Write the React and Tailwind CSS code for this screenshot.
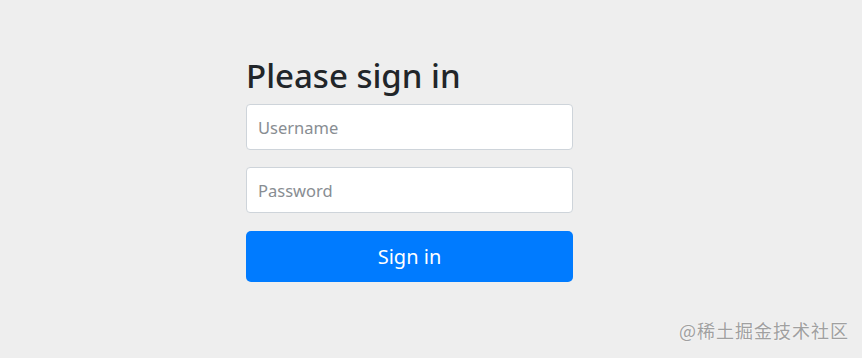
export default function App() {
  return (
    <div className="relative w-[862px] h-[358px] bg-[#eeeeee] font-['Noto_Sans','Open_Sans',sans-serif] overflow-hidden">
      <form className="ml-[246px] pt-[54px] w-[327px] flex flex-col" onSubmit={(e) => e.preventDefault()}>
        <h2 className="text-[33px] leading-[44px] font-medium text-[#212529] mb-[6px]">Please sign in</h2>
        <input
          type="text"
          placeholder="Username"
          className="h-[46px] w-full rounded-[4px] border border-[#ced4da] bg-white px-[11px] pt-[1px] text-[16.5px] text-[#495057] placeholder:text-[#888d92] outline-none"
        />
        <input
          type="password"
          placeholder="Password"
          className="mt-[17px] h-[46px] w-full rounded-[4px] border border-[#ced4da] bg-white px-[11px] pt-[1px] text-[16.5px] text-[#495057] placeholder:text-[#888d92] outline-none"
        />
        <button
          type="submit"
          className="mt-[18px] h-[51px] w-full rounded-[5px] bg-[#007bff] text-white text-[20px]"
        >
          Sign in
        </button>
      </form>
      <div className="absolute right-[13px] bottom-[16px] text-[18px] leading-[24px] tracking-[1px] text-[#a0a0a0] font-['Noto_Sans_CJK_SC',sans-serif] [text-shadow:0_0_2px_#ffffff]">
        @稀土掘金技术社区
      </div>
    </div>
  )
}
